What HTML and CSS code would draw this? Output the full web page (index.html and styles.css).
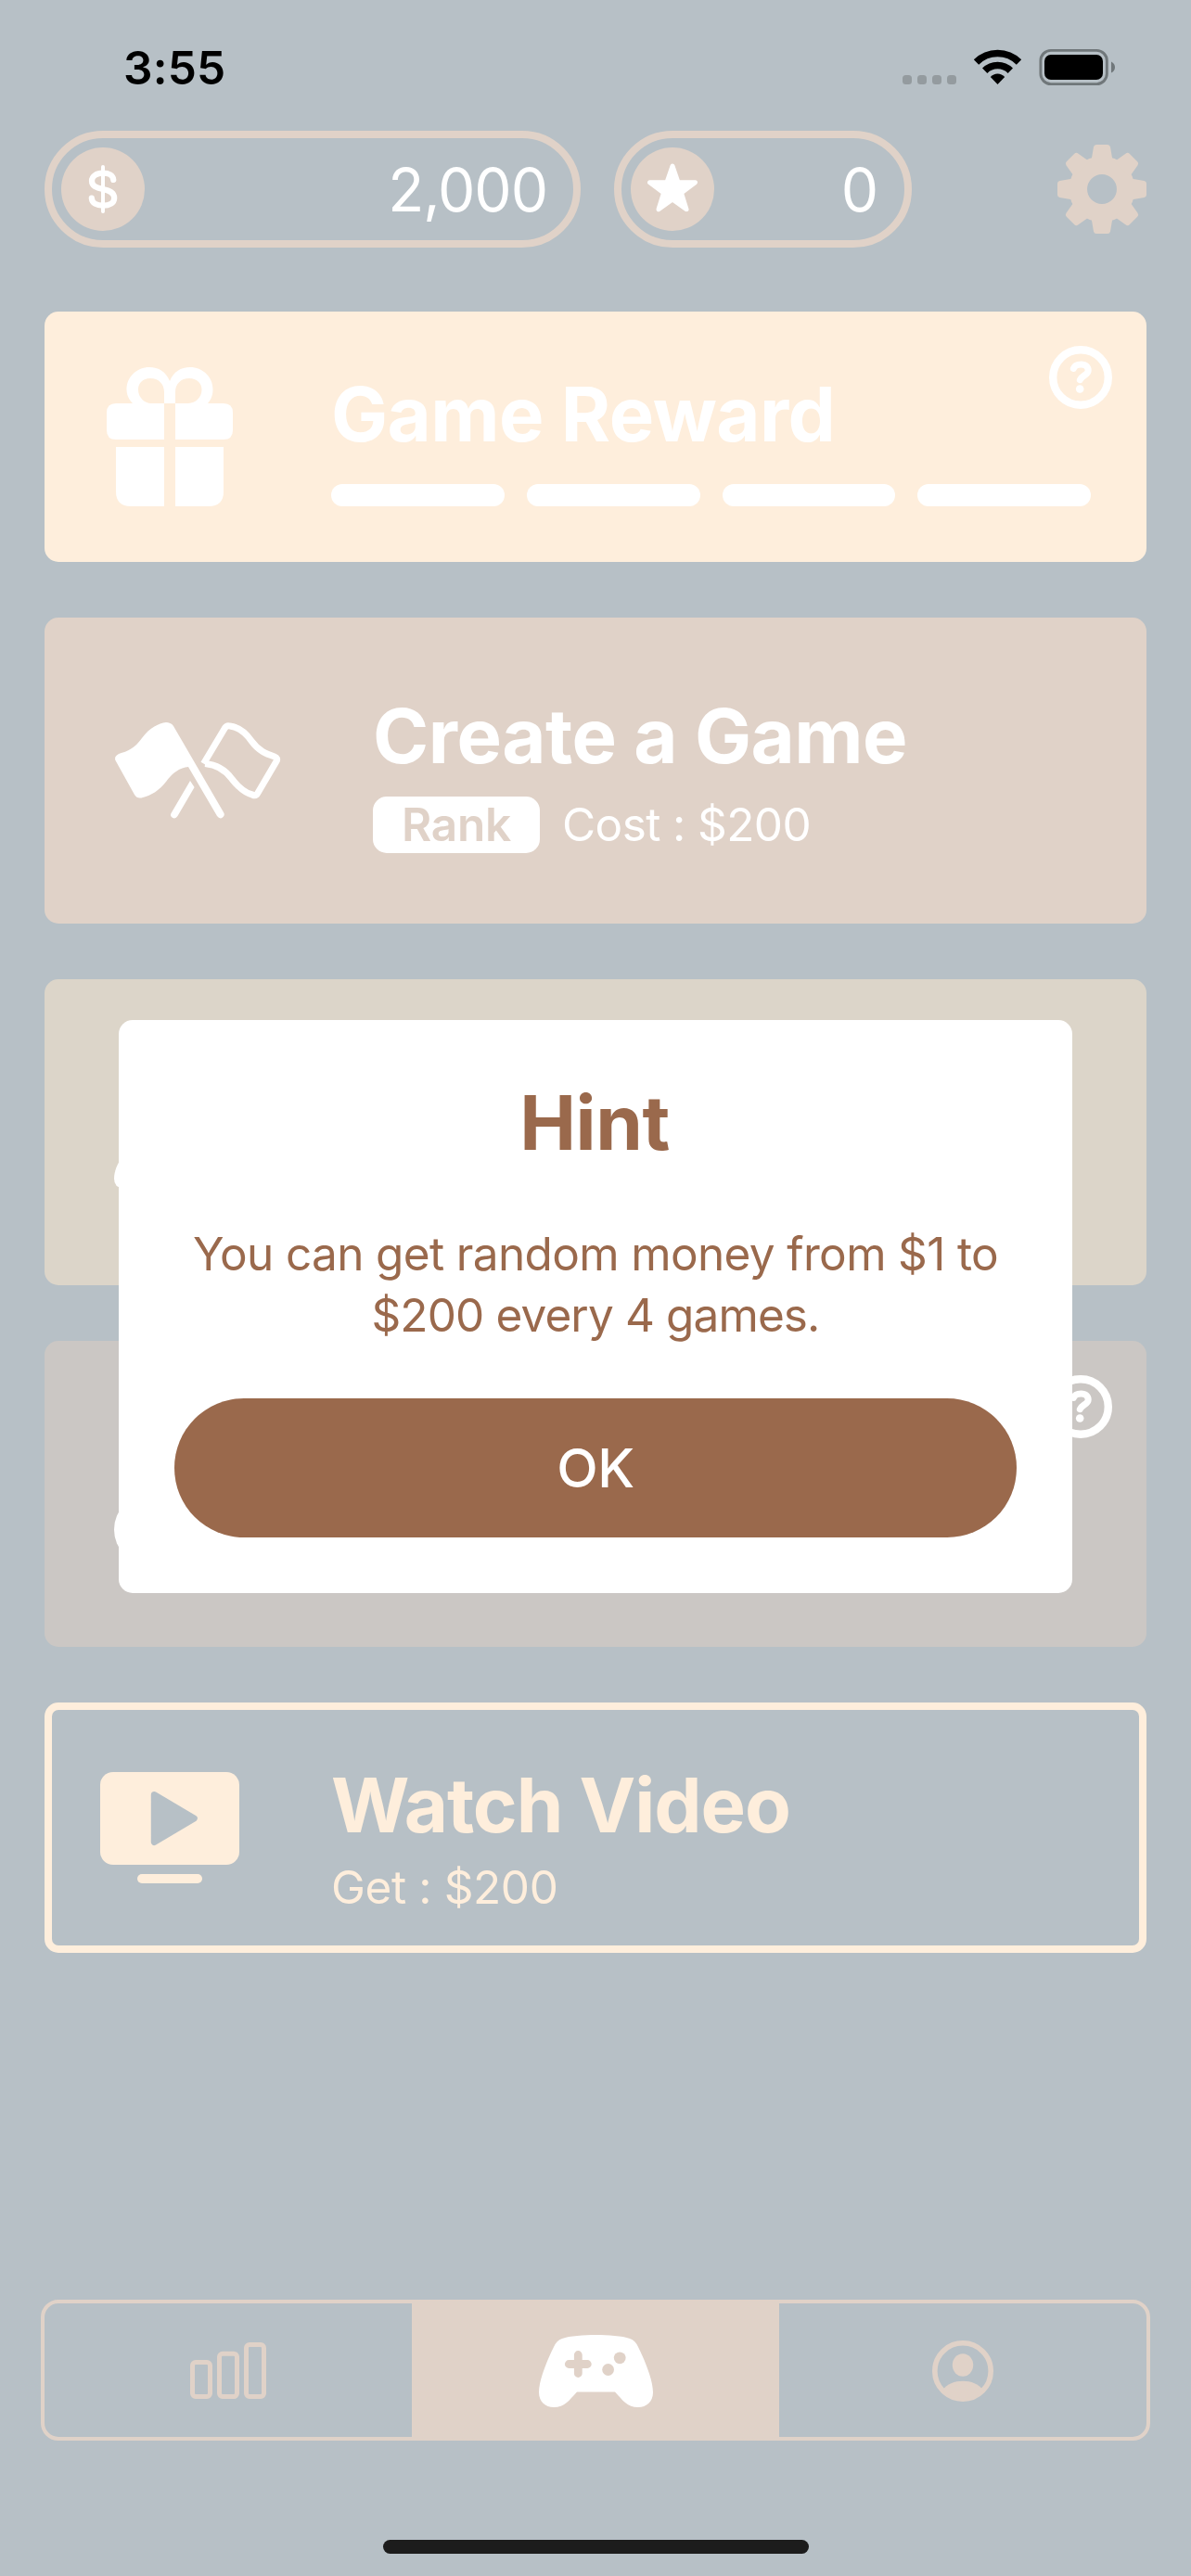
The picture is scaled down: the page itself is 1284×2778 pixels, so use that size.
FILE: index.html
```html
<!DOCTYPE html>
<html lang="en">
<head>
<meta charset="utf-8">
<title>Game Lobby</title>
<link rel="stylesheet" href="styles.css">
</head>
<body>
<div class="screen">
  <header class="status">
    <span class="status-time">3:55</span>
    <svg class="status-icons" width="232" height="44" viewBox="972 51 232 44">
      <g fill="#949b9f">
        <rect x="973" y="81" width="10" height="10" rx="3.5"/>
        <rect x="989" y="81" width="10" height="10" rx="3.5"/>
        <rect x="1005" y="81" width="10" height="10" rx="3.5"/>
        <rect x="1021" y="81" width="10" height="10" rx="3.5"/>
      </g>
      <g fill="none" stroke="#000" stroke-width="7.6">
        <path d="M1052.5 67A32.5 32.5 0 0 1 1098.5 67"/>
        <path d="M1061.7 76.2A19.5 19.5 0 0 1 1089.3 76.2"/>
      </g>
      <path d="M1075.5 91L1067.8 83Q1071 79.4 1075.5 79.4Q1080 79.4 1083.2 83Z"/>
      <rect x="1121.9" y="54.4" width="71.4" height="36.2" rx="11" fill="none" stroke="#70777a" stroke-width="2.9"/>
      <rect x="1126" y="59" width="63" height="27" rx="7"/>
      <path d="M1198 66.5Q1202 68.5 1202 72.5Q1202 76.5 1198 78.5Z" fill="#70777a"/>
    </svg>
  </header>

  <section class="wallet">
    <div class="pill pill-money">
      <svg width="90" height="90" viewBox="66 159 90 90">
        <circle cx="111" cy="204" r="45" fill="#e0d2c8"/>
        <g fill="none" stroke="#fff" stroke-linecap="round">
          <path stroke-width="6.2" d="M122.3 194C122 189 117 186.7 111 186.7C104 186.7 99 190 99 195C99 201 104 202.5 111 204C118 205.5 123.2 207.5 123.2 213.5C123.2 219 118 221.7 111 221.7C104 221.7 99.2 219 98.8 213.7"/>
          <path stroke-width="4" d="M111 180V228"/>
        </g>
      </svg>
      <span>2,000</span>
    </div>
    <div class="pill pill-star">
      <svg width="90" height="90" viewBox="680 159 90 90">
        <circle cx="725" cy="204" r="45" fill="#e0d2c8"/>
        <path fill="#fff" stroke="#fff" stroke-width="5" stroke-linejoin="round" d="M725 179L731 196.5L749.5 196.8L734.5 208L740 225.7L725 215L710 225.7L715.500 208L700.5 196.8L719 196.5Z"/>
      </svg>
      <span>0</span>
    </div>
    <svg class="gear" width="96" height="96" viewBox="-48 -48 96 96">
      <defs><path id="tooth" d="M-11.5 -31L-9 -45.500Q-8.500 -48 -6 -48H6Q8.500 -48 9 -45.500L11.500 -31Z"/></defs>
      <circle r="25.700" fill="none" stroke="#e0d2c8" stroke-width="19.500"/>
      <g fill="#e0d2c8">
        <use href="#tooth"/>
        <use href="#tooth" transform="rotate(45)"/>
        <use href="#tooth" transform="rotate(90)"/>
        <use href="#tooth" transform="rotate(135)"/>
        <use href="#tooth" transform="rotate(180)"/>
        <use href="#tooth" transform="rotate(225)"/>
        <use href="#tooth" transform="rotate(270)"/>
        <use href="#tooth" transform="rotate(315)"/>
      </g>
    </svg>
  </section>

  <main class="cards">
    <article class="card card-reward">
      <svg class="card-icon" width="150" height="150" viewBox="108 396 150 150" fill="#fff">
        <path fill-rule="evenodd" d="M144 436C138.500 431 136.500 425 136.500 420C136.500 406 148 396 161 396C171 396 179 401 183 411C187 401 195 396 205 396C218 396 229.500 406 229.500 420C229.500 427 227 432 223 436H189V435H177V436ZM177 435V423C177 414 171 408 162 408C154 408 149 413 149 420A14.500 15 0 0 0 163 435ZM189 435V423C189 414 195 408 204 408C212 408 217.500 413 217.500 420A14.500 15 0 0 1 203 435Z"/>
        <path d="M177 435H125Q115 435 115 445V464Q115 474 125 474H177Z"/>
        <path d="M189 435H241Q251 435 251 445V464Q251 474 241 474H189Z"/>
        <path d="M177 482H125V530Q125 546 141 546H177Z"/>
        <path d="M189 482H241V530Q241 546 225 546H189Z"/>
      </svg>
      <div class="card-body">
        <h2 class="t-reward">Game Reward</h2>
        <div class="progress"><i></i><i></i><i></i><i></i></div>
      </div>
      <svg class="help" width="68" height="68" viewBox="1131 373 68 68">
        <g id="help-mark">
          <circle cx="1165" cy="407" r="29.800" fill="none" stroke="#fff" stroke-width="8.400"/>
          <path d="M1157.300 397.500C1158.500 394 1161.500 393 1165.500 393C1170.500 393 1173.200 396 1173.200 399.500C1173.200 404.500 1166 405 1164.300 409.700" fill="none" stroke="#fff" stroke-width="7" stroke-linecap="round"/>
          <circle cx="1164.200" cy="419.500" r="4.300" fill="#fff"/>
        </g>
      </svg>
    </article>

    <article class="card card-create">
      <svg class="card-icon" width="210" height="110" viewBox="108 776 210 110">
        <path fill="#fff" d="M187 783C185 780 182 779 179 779C171 780 161 785 153 796C145 807 138 810 128 813Q122 816 125 821L145 857Q148 862 154 860C163 858 172 852 179 843C186 833 194 828 203 827L234 880Q237 884 240 881.500Q243 879 241 876Z"/>
        <path fill="none" stroke="#fff" stroke-width="7" stroke-linejoin="round" d="M219.500 823.500L242.500 785Q244.500 782 248 783C256 784 264 789 271 799C279 810 287 813 296 816Q300 817.500 298 821L278 855Q276 859 272 857C264 855 257 849 250 840C242 829 233 824.500 221 823.500"/>
        <path fill="#fff" d="M205 842L209.600 849L191.500 880Q189 884 185.500 881.500Q183 879.500 184.500 877Z"/>
      </svg>
      <div class="card-body">
        <h2 class="t-create">Create a Game</h2>
        <div class="meta"><span class="badge">Rank</span><span class="cost">Cost : $200</span></div>
      </div>
    </article>

    <article class="card card-join">
      <svg class="card-icon" width="210" height="110" viewBox="108 1166 210 110">
        <path fill="#fff" d="M160 1230C136 1236 123 1256 123 1271Q123 1281 133 1281H185V1230Z"/>
      </svg>
    </article>

    <article class="card card-room">
      <svg class="card-icon" width="210" height="110" viewBox="108 1556 210 110">
        <circle cx="161.500" cy="1649.500" r="38.500" fill="#fff"/>
      </svg>
      <svg class="help" width="68" height="68" viewBox="1131 373 68 68"><use href="#help-mark"/></svg>
    </article>

    <article class="card card-video">
      <svg class="card-icon" width="150" height="120" viewBox="108 1911 150 120">
        <rect x="108" y="1911" width="150" height="100" rx="14" fill="#feeedc"/>
        <path d="M166.300 1935.500L209.300 1961L166.300 1986.500Z" fill="#b7c0c6" stroke="#b7c0c6" stroke-width="7" stroke-linejoin="round"/>
        <rect x="148" y="2021" width="70" height="10" rx="5" fill="#feeedc"/>
      </svg>
      <div class="card-body">
        <h2 class="t-video">Watch Video</h2>
        <p class="get">Get : $200</p>
      </div>
    </article>
  </main>

  <nav class="tabs">
    <a class="tab">
      <svg width="84" height="64" viewBox="204 2525 84 64" fill="none" stroke="#e0d2c8" stroke-width="5">
        <rect x="207.500" y="2547.500" width="19" height="37" rx="3.500"/>
        <rect x="236.500" y="2538.300" width="19" height="46.200" rx="3.500"/>
        <rect x="265.500" y="2528.500" width="19" height="56" rx="3.500"/>
      </svg>
    </a>
    <a class="tab tab-active">
      <svg width="125" height="80" viewBox="580 2517 125 80">
        <path fill="#fff" d="M642.500 2518C630 2518 614 2519 606 2522Q600 2524 597 2531C591 2543 581 2566 581 2580C581 2590 588 2596 597 2596C609 2596 613 2589 622 2579.500H663C672 2589 676 2596 688 2596C697 2596 704 2590 704 2580C704 2566 694 2543 688 2531Q685 2524 679 2522C671 2519 655 2518 642.500 2518Z"/>
        <path d="M623.300 2539.500V2559.500M613.300 2549.500H633.300" stroke="#e0d2c8" stroke-width="8.800" stroke-linecap="round"/>
        <circle cx="655.600" cy="2555.500" r="6.400" fill="#e0d2c8"/>
        <circle cx="668.200" cy="2542.800" r="6.400" fill="#e0d2c8"/>
      </svg>
    </a>
    <a class="tab">
      <svg width="66" height="66" viewBox="1005 2524 66 66">
        <circle cx="1038" cy="2557" r="30.200" fill="none" stroke="#e0d2c8" stroke-width="5.600"/>
        <g fill="#e0d2c8">
          <ellipse cx="1038" cy="2550.500" rx="11.200" ry="12.200"/>
          <path d="M1016 2577.500C1021 2571 1029 2567.800 1038 2567.800C1047 2567.800 1055 2571 1060 2577.500A30 30 0 0 1 1016 2577.500Z"/>
        </g>
      </svg>
    </a>
  </nav>
  <div class="home-bar"></div>

  <div class="overlay">
    <div class="dialog" role="dialog">
      <h1>Hint</h1>
      <p><span class="line-a">You can get random money from $1 to</span><br><span class="line-b">$200 every 4 games.</span></p>
      <button type="button">OK</button>
    </div>
  </div>
</div>
</body>
</html>
```
FILE: styles.css
```css
* { box-sizing: border-box; margin: 0; padding: 0; }

body {
  background: #b7c0c6;
  color: #fff;
  font-family: Inter, "Liberation Sans", sans-serif;
}

svg { display: block; flex: none; }

.screen {
  position: relative;
  display: flex;
  flex-direction: column;
  width: 1284px;
  height: 2778px;
  overflow: hidden;
}

/* Status bar */
.status {
  display: flex;
  align-items: center;
  justify-content: space-between;
  height: 141px;
  padding: 5px 80px 0 133px;
  color: #000;
}
.status-time { font-size: 49.5px; font-weight: 600; letter-spacing: .2px; }

/* Balances */
.wallet {
  display: flex;
  align-items: center;
  gap: 36px;
  height: 126px;
  padding: 0 48px;
}
.pill {
  display: flex;
  align-items: center;
  justify-content: space-between;
  height: 126px;
  padding: 0 28px 0 10px;
  border: 8px solid #e0d2c8;
  border-radius: 63px;
  font-size: 64px;
}
.pill span { padding-top: 1px; }
.pill-money { width: 578px; }
.pill-money span { letter-spacing: -1.05px; }
.pill-star { width: 321px; }
.gear { margin-left: auto; }

/* Cards */
.cards {
  display: flex;
  flex: 1;
  flex-direction: column;
  gap: 60px;
  padding: 69px 48px 0;
}
.card {
  position: relative;
  display: flex;
  align-items: center;
  height: 330px;
  padding: 0 60px;
  border-radius: 15px;
}
.card-body { align-self: flex-start; }
.card h2, .dialog h1 { font-size: 81.4px; font-weight: 700; line-height: 100px; }

.card-reward { gap: 99px; height: 270px; background: #feeedc; }
.card-reward .card-body { flex: 1; padding-top: 61px; }
.card-reward .t-reward { letter-spacing: -.5px; }
.progress { display: grid; grid-template-columns: repeat(4, 1fr); gap: 24px; margin-top: 25px; }
.progress i { height: 24px; border-radius: 12px; background: #fff; }

.help { position: absolute; top: 37px; right: 37px; }

.card-create { gap: 84px; background: #e0d2c8; }
.card-create .card-body { padding-top: 78px; }
.card-create .t-create { letter-spacing: -.48px; }
.meta { display: flex; align-items: center; gap: 24px; margin-top: 15px; font-size: 49.5px; line-height: 61px; }
.badge {
  width: 180px;
  height: 61px;
  border-radius: 15px;
  background: #fff;
  color: #e0d2c8;
  font-weight: 600;
  letter-spacing: -.25px;
  text-align: center;
}
.cost { font-feature-settings: "calt" 0; letter-spacing: -.6px; }

.card-join { background: #dcd5c9; }
.card-join .card-icon, .card-room .card-icon { overflow: visible; }
.card-room { background: #cbc7c4; }

.card-video {
  gap: 99px;
  height: 270px;
  padding: 0 52px;
  border: 8px solid #feeedc;
  color: #feeedc;
}
.card-video .card-body { padding-top: 53px; }
.card-video .t-video { letter-spacing: -1.05px; }
.get {
  margin-top: 8px;
  font-size: 49.5px;
  line-height: 60px;
  letter-spacing: -.4px;
  font-feature-settings: "calt" 0;
}

/* Bottom navigation */
.tabs {
  display: flex;
  height: 152px;
  margin: 0 44px;
  border: 4px solid #e0d2c8;
  border-radius: 19px;
}
.tab { display: flex; flex: 1; align-items: center; justify-content: center; padding-top: 2px; }
.tab-active { background: #e0d2c8; }

.home-bar {
  width: 459px;
  height: 15px;
  margin: 107px auto 24px;
  border-radius: 8px;
  background: #1c1c1c;
}

/* Hint dialog */
.overlay {
  position: absolute;
  inset: 0;
  display: flex;
  align-items: center;
  justify-content: center;
  padding-top: 40px;
}
.dialog {
  display: flex;
  flex-direction: column;
  width: 1028px;
  height: 618px;
  padding: 61px 60px 60px;
  border-radius: 15px;
  background: #fff;
  color: #9a694c;
  text-align: center;
}
.dialog h1 { padding-right: 2px; letter-spacing: -.4px; }
.dialog p { margin-top: 58px; font-size: 49.5px; line-height: 66px; white-space: nowrap; }
.line-a { letter-spacing: -.65px; }
.line-b { letter-spacing: -.88px; }
.dialog button {
  height: 150px;
  margin-top: auto;
  border: 0;
  border-radius: 75px;
  background: #9a694c;
  color: #fff;
  font: 550 58px Inter, "Liberation Sans", sans-serif;
  letter-spacing: -.3px;
}
```
